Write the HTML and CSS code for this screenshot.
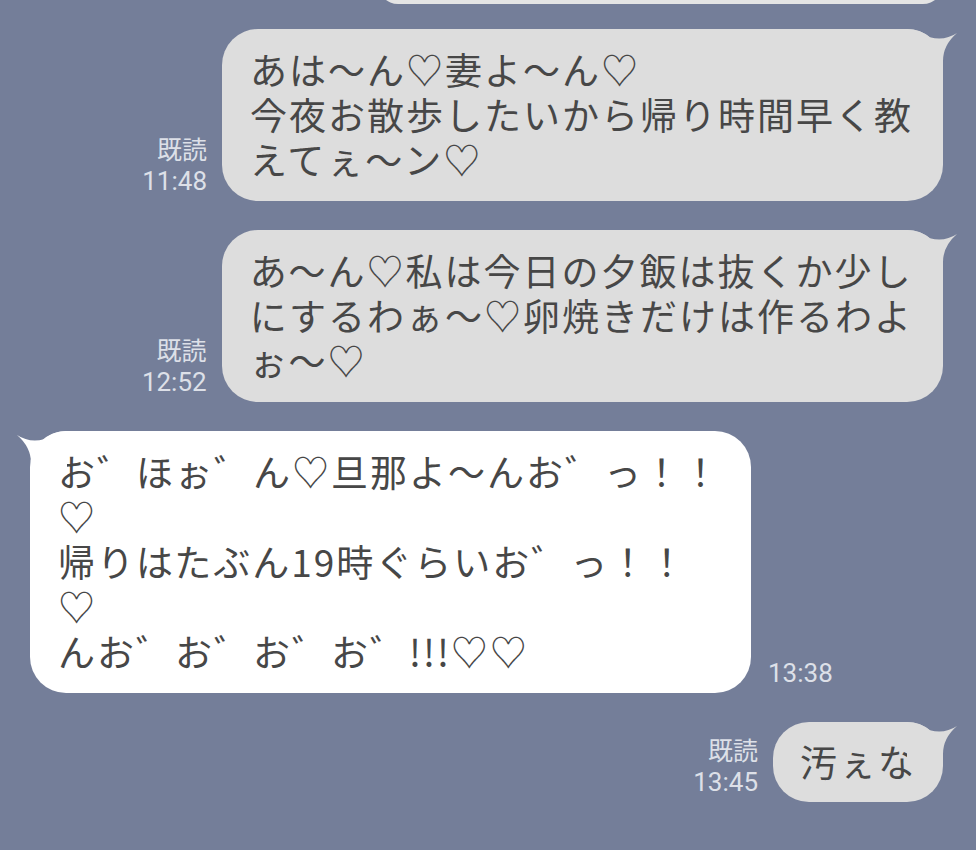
FILE: index.html
```html
<!DOCTYPE html>
<html lang="ja">
<head>
<meta charset="utf-8">
<title>chat</title>
<link rel="stylesheet" href="styles.css">
</head>
<body>
<div class="chat">
  <div class="row sent">
    <div class="bubble ghost"></div>
  </div>

  <div class="row sent">
    <div class="meta"><span class="read">既読</span><span class="time">11:48</span></div>
    <div class="bubble gray">
      <p class="text">あは〜ん♡妻よ〜ん♡<br>今夜お散歩したいから帰り時間早く教<br>えてぇ〜ン♡</p>
      <svg class="tail" viewBox="-36 0 52 44" aria-hidden="true"><path d="M-36 0 A36 36 0 0 1 -13 8.3 Q2 12 14 4 Q0 16 0 32 L0 44 L-36 44 Z"/></svg>
    </div>
  </div>

  <div class="row sent">
    <div class="meta"><span class="read">既読</span><span class="time">12:52</span></div>
    <div class="bubble gray">
      <p class="text">あ〜ん♡私は今日の夕飯は抜くか少し<br>にするわぁ〜♡卵焼きだけは作るわよ<br>ぉ〜♡</p>
      <svg class="tail" viewBox="-36 0 52 44" aria-hidden="true"><path d="M-36 0 A36 36 0 0 1 -13 8.3 Q2 12 14 4 Q0 16 0 32 L0 44 L-36 44 Z"/></svg>
    </div>
  </div>

  <div class="row received">
    <div class="bubble white">
      <p class="text">お゛ほぉ゛ん♡旦那よ〜んお゛っ！！<br>♡<br>帰りはたぶん19時ぐらいお゛っ！！<br>♡<br>んお゛お゛お゛お゛!!!♡♡</p>
      <svg class="tail" viewBox="-36 0 52 44" aria-hidden="true"><path d="M-36 0 A36 36 0 0 1 -13 8.3 Q2 12 14 4 Q0 16 0 32 L0 44 L-36 44 Z"/></svg>
    </div>
    <div class="meta"><span class="time">13:38</span></div>
  </div>

  <div class="row sent">
    <div class="meta"><span class="read">既読</span><span class="time">13:45</span></div>
    <div class="bubble gray short">
      <p class="text">汚ぇな</p>
      <svg class="tail" viewBox="-36 0 52 44" aria-hidden="true"><path d="M-36 0 A36 36 0 0 1 -13 8.3 Q2 12 14 4 Q0 16 0 32 L0 44 L-36 44 Z"/></svg>
    </div>
  </div>
</div>
</body>
</html>
```

FILE: styles.css
```css
html, body {
  margin: 0;
  padding: 0;
  background: #747e99;
}

body {
  width: 976px;
  height: 850px;
  overflow: hidden;
  font-family: "Noto Sans CJK JP", "Noto Sans", sans-serif;
}

.chat {
  display: flex;
  flex-direction: column;
  gap: 29px;
  padding: 0 33px 0 30px;
}

.row {
  display: flex;
  align-items: flex-end;
  gap: 15px;
}

.row.sent {
  justify-content: flex-end;
}

.row.received {
  justify-content: flex-start;
  gap: 17px;
}

.bubble {
  position: relative;
  border-radius: 36px;
  padding: 18px 30px 19px 28px;
}

.bubble.gray {
  background: #dddddd;
}

.bubble.white {
  background: #ffffff;
}

.bubble.short {
  padding: 17px 26px 18px 27px;
}

.bubble.ghost {
  width: 565px;
  height: 40px;
  padding: 0;
  margin-top: -37px;
  margin-bottom: -4px;
  background: #e4e4e4;
}

.text {
  margin: 0;
  font-size: 37px;
  line-height: 45px;
  letter-spacing: 2px;
  color: #474747;
  white-space: nowrap;
}

.tail {
  position: absolute;
  top: 0;
  width: 52px;
  height: 44px;
}

.gray .tail {
  right: -16px;
  fill: #dddddd;
}

.white .tail {
  left: -15px;
  fill: #ffffff;
  transform: scaleX(-1);
}

.meta {
  display: flex;
  flex-direction: column;
  align-items: flex-end;
  margin-bottom: 3px;
  color: #dde0e8;
  line-height: 33px;
}

.read {
  font-family: "Noto Sans CJK JP", sans-serif;
  font-size: 25px;
}

.time {
  font-family: Roboto, "Noto Sans", sans-serif;
  font-size: 26px;
}
```
